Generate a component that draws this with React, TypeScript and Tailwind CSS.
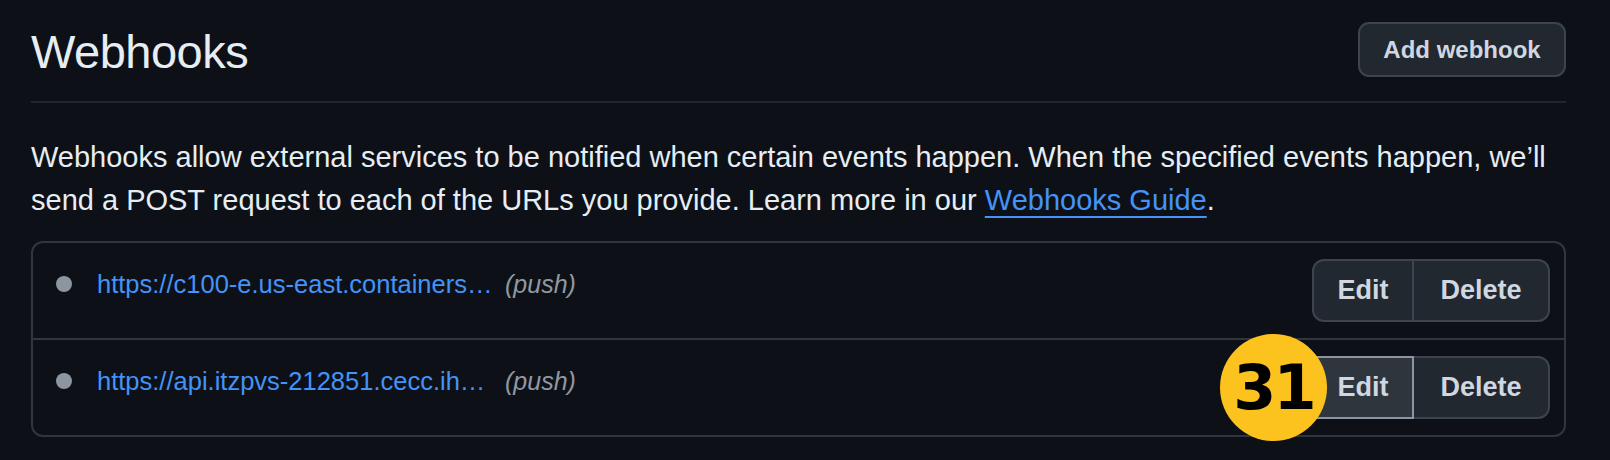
const HOOKS = [
  { url: 'https://c100-e.us-east.containers…', lift: 'pb-[14px]', active: false },
  { url: 'https://api.itzpvs-212851.cecc.ih…', lift: 'pb-[14px]', active: true },
]

function HookRow({ url, lift, active, last }: { url: string; lift: string; active: boolean; last: boolean }) {
  return (
    <div
      className={`flex items-center justify-between pl-[23px] pr-[14px] ${
        last ? 'h-[95px]' : 'h-[97px] border-b-2 border-[#30363d]'
      }`}
    >
      <div className={`flex items-center leading-[30px] ${lift}`}>
        <span className="h-[16px] w-[16px] rounded-full bg-[#8d96a0]" />
        <a className="ml-[25px] inline-block w-[404px] truncate text-[25.5px] text-[#4493f8]">{url}</a>
        <em className="ml-[4px] text-[25px] text-[#9198a1]">(push)</em>
      </div>
      <div className="relative flex">
        <button
          type="button"
          className={`flex h-[63px] w-[102px] items-center justify-center border-2 text-[27px] font-bold text-[#d1d7e0] ${
            active ? 'rounded-l-[4px] border-[#8d96a0] bg-[#2f353d]' : 'rounded-l-[12px] border-[#3d444d] bg-[#212830]'
          }`}
        >
          Edit
        </button>
        <button
          type="button"
          className="flex h-[63px] w-[136px] items-center justify-center rounded-r-[12px] border-2 border-l-0 border-[#3d444d] bg-[#212830] text-[27px] font-bold text-[#d1d7e0]"
        >
          Delete
        </button>
        {active && (
          <div className="absolute -left-[92px] -top-[22px] z-10 flex h-[107px] w-[107px] items-center justify-center rounded-full bg-[#fcc21d]">
            <span className="font-['DejaVu_Sans',sans-serif] text-[62px] font-bold leading-none tracking-[-3px] text-black">
              31
            </span>
          </div>
        )}
      </div>
    </div>
  )
}

export default function App() {
  return (
    <div className="min-h-[460px] w-full bg-[#0d1117] font-['Liberation_Sans',Arial,sans-serif]">
      <div className="ml-[31px] w-[1535px] pt-[22px]">
        <div className="flex items-center justify-between border-b-2 border-[#21262d] pb-[24px]">
          <h2 className="pt-[4px] text-[47px] font-normal leading-none tracking-[-0.5px] text-[#e6edf3]">Webhooks</h2>
          <button
            type="button"
            className="h-[55px] w-[208px] rounded-[11px] border-2 border-[#3d444d] bg-[#212830] text-[24px] font-bold text-[#d1d7e0]"
          >
            Add webhook
          </button>
        </div>

        <p className="mt-[33px] text-[29px] leading-[43px] text-[#e6edf3]">
          Webhooks allow external services to be notified when certain events happen. When the specified events happen, we’ll
          <br />
          send a POST request to each of the URLs you provide. Learn more in our{' '}
          <a className="text-[#4493f8] underline decoration-2 underline-offset-[6px]">Webhooks Guide</a>.
        </p>

        <div className="mt-[19px] rounded-[12px] border-2 border-[#30363d]">
          {HOOKS.map((h, i) => (
            <HookRow key={h.url} url={h.url} lift={h.lift} active={h.active} last={i === HOOKS.length - 1} />
          ))}
        </div>
      </div>
    </div>
  )
}
